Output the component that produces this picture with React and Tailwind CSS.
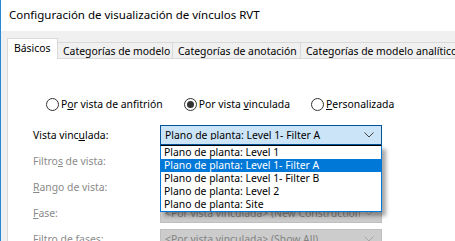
import React from 'react';

const font = { fontFamily: '"Noto Sans", "Liberation Sans", sans-serif' };

const Chevron = ({ color = '#444' }) => (
    <svg width="10" height="6" viewBox="0 0 10 6" className="shrink-0">
        <polyline points="0.5,0.5 5,5 9.5,0.5" fill="none" stroke={color} strokeWidth="1" />
    </svg>
);

const Radio = ({ checked, children }) => (
    <div className="flex items-center gap-[2px]">
        <div className="w-[13px] h-[13px] rounded-full border border-[#333] bg-white flex items-center justify-center">
            {checked && <div className="w-[7px] h-[7px] rounded-full bg-[#333]" />}
        </div>
        <span className="text-black whitespace-nowrap">{children}</span>
    </div>
);

const Combo = ({ children, disabled }) => (
    <div
        className={
            'w-[222px] h-[20px] flex items-center gap-[4px] pl-[4px] pr-[7px] border ' +
            (disabled
                ? 'bg-[#cccccc] border-[#bfbfbf] text-[#838383]'
                : 'bg-[#cce4f7] border-[#005499] text-black')
        }
    >
        <span className="flex-1 whitespace-nowrap overflow-hidden">{children}</span>
        <Chevron color={disabled ? '#a8a8a8' : '#444'} />
    </div>
);

const options = [
    'Plano de planta: Level 1',
    'Plano de planta: Level 1- Filter A',
    'Plano de planta: Level 1- Filter B',
    'Plano de planta: Level 2',
    'Plano de planta: Site',
];

const Row = ({ label, disabled, children }) => (
    <div className="flex items-center h-[20px]">
        <span className={'w-[127px] whitespace-nowrap ' + (disabled ? 'text-[#8a8a8a]' : 'text-black')}>{label}</span>
        {children}
    </div>
);

const App = () => {
    return (
        <div
            className="w-[455px] h-[241px] overflow-hidden bg-[#f0f0f0] border-l border-[#2b88d8] text-[10.4px] leading-none flex flex-col"
            style={font}
        >
            <div className="h-[31px] shrink-0 bg-white flex items-center pl-[8px] pb-[1px] text-[11.5px] text-black whitespace-nowrap">
                Configuración de visualización de vínculos RVT
            </div>

            <div className="pl-[6px] pt-[7px] flex flex-col flex-1">
                {/* tabs */}
                <div className="flex items-end h-[21px] relative z-10 whitespace-nowrap">
                    <div className="h-[21px] w-[51px] shrink-0 bg-white border border-b-0 border-[#d9d9d9] flex items-center pl-[6px] pb-[1px]">
                        Básicos
                    </div>
                    <div className="h-[17px] w-[115px] shrink-0 border-t border-r border-[#d9d9d9] flex items-center pl-[5px]">
                        Categorías de modelo
                    </div>
                    <div className="h-[17px] w-[128px] shrink-0 border-t border-r border-[#d9d9d9] flex items-center pl-[5px]">
                        Categorías de anotación
                    </div>
                    <div className="h-[17px] w-[170px] shrink-0 border-t border-[#d9d9d9] flex items-center pl-[5px]">
                        Categorías de modelo analítico
                    </div>
                </div>

                {/* panel */}
                <div className="flex-1 -mt-px bg-white border border-[#d9d9d9] border-r-0 pl-[25px] pt-[38px] relative">
                    <div className="flex items-center h-[14px] pl-[13px]">
                        <Radio>P<u>o</u>r vista de anfitrión</Radio>
                        <div className="w-[21px]" />
                        <Radio checked>Por vista <u>v</u>inculada</Radio>
                        <div className="w-[21px]" />
                        <Radio><u>P</u>ersonalizada</Radio>
                    </div>

                    <div className="flex flex-col gap-[6px] mt-[14px]">
                        <Row label={<>Vista vinc<u>u</u>lada:</>}>
                            <div className="relative">
                                <Combo>Plano de planta: Level 1- Filter A</Combo>
                                <div className="absolute left-0 top-[20px] w-[222px] bg-white border border-[#0078d7] border-t-black z-20 shadow-[4px_4px_4px_rgba(0,0,0,0.35)]">
                                    {options.map((o, i) => (
                                        <div
                                            key={o}
                                            className={
                                                'h-[13px] flex items-center pl-[3px] whitespace-nowrap ' +
                                                (i === 1 ? 'bg-[#0078d7] text-white' : 'text-black')
                                            }
                                        >
                                            {o}
                                        </div>
                                    ))}
                                </div>
                            </div>
                        </Row>
                        <Row label={<>Filtro<u>s</u> de vista:</>} disabled>
                            <Combo disabled>&lt;Por vista vinculada&gt;</Combo>
                        </Row>
                        <Row label={<><u>R</u>ango de vista:</>} disabled>
                            <Combo disabled>&lt;Por vista vinculada&gt;</Combo>
                        </Row>
                        <Row label={<><u>F</u>ase:</>} disabled>
                            <Combo disabled>&lt;Por vista vinculada&gt; (New Construction)</Combo>
                        </Row>
                        <Row label="Filtro de fases:" disabled>
                            <Combo disabled>&lt;Por vista vinculada&gt; (Show All)</Combo>
                        </Row>
                    </div>
                </div>
            </div>
        </div>
    );
};

export default App;
